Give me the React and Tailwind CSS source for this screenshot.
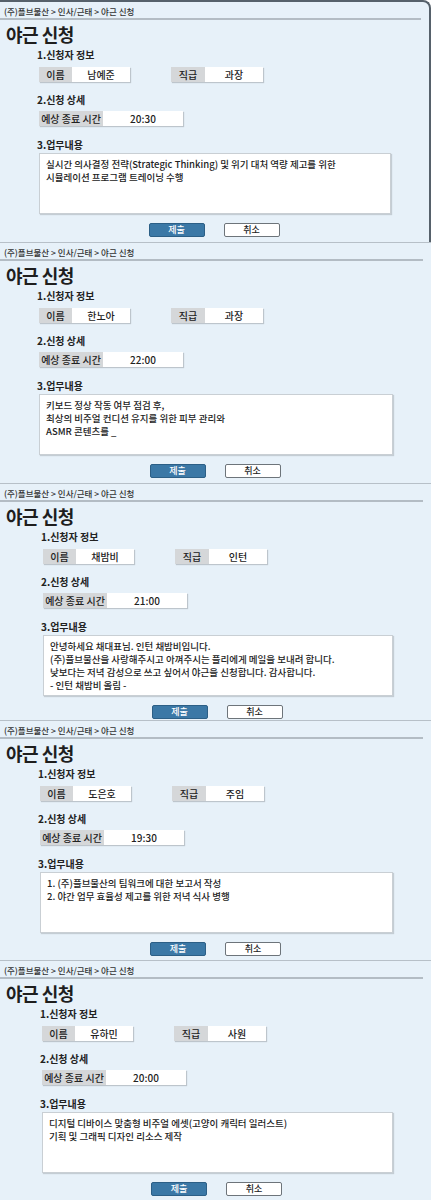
const FONT = { fontFamily: '"Noto Sans CJK KR", "Noto Sans", sans-serif' }

const requests = [
  {
    name: '남예준',
    rank: '과장',
    end: '20:30',
    lines: [
      '실시간 의사결정 전략(Strategic Thinking) 및 위기 대처 역량 제고를 위한',
      '시뮬레이션 프로그램 트레이닝 수행',
    ],
    h: 'h-[242px]',
    x: 'pl-[39px]',
  },
  {
    name: '한노아',
    rank: '과장',
    end: '22:00',
    lines: ['키보드 정상 작동 여부 점검 후,', '최상의 비주얼 컨디션 유지를 위한 피부 관리와', 'ASMR 콘텐츠를 _'],
    h: 'h-[241px]',
    x: 'pl-[39px]',
  },
  {
    name: '채밤비',
    rank: '인턴',
    end: '21:00',
    lines: [
      '안녕하세요 채대표님. 인턴 채밤비입니다.',
      '(주)플브물산을 사랑해주시고 아껴주시는 플리에게 메일을 보내려 합니다.',
      '낮보다는 저녁 감성으로 쓰고 싶어서 야근을 신청합니다. 감사합니다.',
      '- 인턴 채밤비 올림 -',
    ],
    h: 'h-[237px]',
    x: 'pl-[43px]',
  },
  {
    name: '도은호',
    rank: '주임',
    end: '19:30',
    lines: ['1. (주)플브물산의 팀워크에 대한 보고서 작성', '2. 야간 업무 효율성 제고를 위한 저녁 식사 병행'],
    h: 'h-[240px]',
    x: 'pl-[40px]',
  },
  {
    name: '유하민',
    rank: '사원',
    end: '20:00',
    lines: ['디지털 디바이스 맞춤형 비주얼 에셋(고양이 캐릭터 일러스트)', '기획 및 그래픽 디자인 리소스 제작'],
    h: 'h-[240px]',
    x: 'pl-[42px]',
  },
]

function Field({ label, value, labelW, valueW }) {
  return (
    <div className="flex h-[15px] shadow-[1px_1px_1px_rgba(0,0,0,0.18)]">
      <div className={`${labelW} flex items-center justify-center bg-[#d5d7d9] text-[10px] font-medium text-[#222]`}>{label}</div>
      <div className={`${valueW} flex items-center justify-center bg-white text-[10px] font-medium text-[#222]`}>{value}</div>
    </div>
  )
}

function Panel({ req, first }) {
  return (
    <div
      className={`${req.h} flex flex-col overflow-hidden bg-[#e7f1f9] ${
        first ? 'border-t-2 border-r-2 border-[#56616b] rounded-tr-[8px]' : 'border-t border-[#b7c0c8]'
      }`}
    >
      {/* breadcrumb */}
      <div className="mr-[8px] h-[18px] flex items-center pl-[4px] pt-[2px] border-b-2 border-[#b3bcc4] text-[8.5px] font-medium text-[#333]">
        (주)플브물산 &gt; 인사/근태 &gt; 야근 신청
      </div>
      <h1 className="pl-[6px] mt-[2px] text-[18px] font-bold leading-[24px] text-[#1e1e1e] tracking-[-0.5px]">야근 신청</h1>

      <div className={`${req.x} pr-[38px]`}>
        <div className="-ml-[2px] mt-[2px] text-[10px] font-bold leading-[14px] text-[#222]">1.신청자 정보</div>
        <div className="mt-[5px] flex gap-[41px]">
          <Field label="이름" value={req.name} labelW="w-[33px]" valueW="w-[58px]" />
          <Field label="직급" value={req.rank} labelW="w-[34px]" valueW="w-[58px]" />
        </div>

        <div className="-ml-[2px] mt-[11px] text-[10px] font-bold leading-[14px] text-[#222]">2.신청 상세</div>
        <div className="mt-[4px] flex">
          <Field label="예상 종료 시간" value={req.end} labelW="w-[64px]" valueW="w-[80px]" />
        </div>

        <div className="-ml-[2px] mt-[12px] text-[10px] font-bold leading-[14px] text-[#222]">3.업무내용</div>
        <div className="mt-[1px] h-[61px] bg-white border border-[#c9cfd4] shadow-[1px_1px_1px_rgba(0,0,0,0.15)] px-[6px] pt-[4px] text-[9.5px] font-medium leading-[13px] text-[#222]">
          {req.lines.map((l) => (
            <div key={l} className="whitespace-nowrap">{l}</div>
          ))}
        </div>

        <div className="mt-[9px] flex justify-center gap-[19px] pr-[2px]">
          <button className="w-[56px] h-[14px] flex items-center justify-center rounded-[2px] bg-[#3b78a6] border border-[#2c5f86] text-[9px] font-medium text-white">
            제출
          </button>
          <button className="w-[56px] h-[14px] flex items-center justify-center rounded-[2px] bg-white border border-[#6d747a] text-[9px] font-medium text-[#222]">
            취소
          </button>
        </div>
      </div>
    </div>
  )
}

export default function App() {
  return (
    <div className="w-[431px] h-[1200px] bg-white flex flex-col" style={FONT}>
      {requests.map((r, i) => (
        <Panel key={r.name} req={r} first={i === 0} />
      ))}
    </div>
  )
}
